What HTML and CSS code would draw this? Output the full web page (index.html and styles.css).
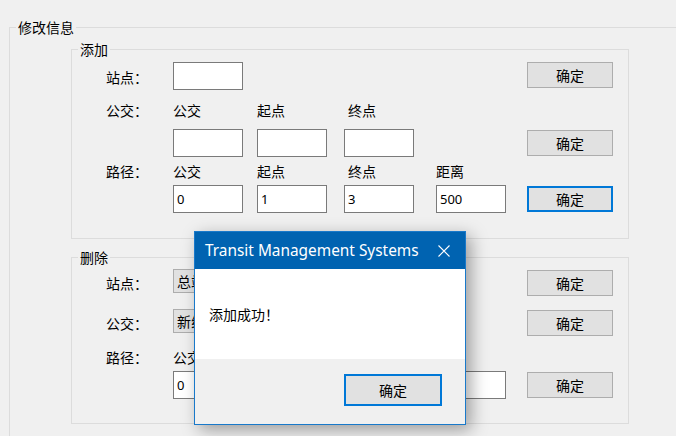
FILE: index.html
```html
<!DOCTYPE html>
<html lang="zh-CN">
<head>
    <meta charset="UTF-8">
    <title>修改信息</title>
    <link rel="stylesheet" href="styles.css">
</head>
<body>
    <fieldset class="group outer">
        <legend>修改信息</legend>

        <fieldset class="group add">
            <legend>添加</legend>
            <div class="rows">
                <div class="row h29">
                    <span class="lbl">站点：</span>
                    <input type="text" class="box mt1">
                    <button class="btn c6">确定</button>
                </div>
                <div class="row h38">
                    <span class="lbl">公交：</span>
                    <span class="lbl">公交</span>
                    <span class="lbl">起点</span>
                    <span class="lbl pl4">终点</span>
                </div>
                <div class="row h28">
                    <input type="text" class="box c2">
                    <input type="text" class="box">
                    <input type="text" class="box">
                    <button class="btn c6 mt1">确定</button>
                </div>
                <div class="row h28">
                    <span class="lbl">路径：</span>
                    <span class="lbl">公交</span>
                    <span class="lbl">起点</span>
                    <span class="lbl pl4">终点</span>
                    <span class="lbl">距离</span>
                </div>
                <div class="row h28">
                    <input type="text" class="box c2" value="0">
                    <input type="text" class="box" value="1">
                    <input type="text" class="box" value="3">
                    <input type="text" class="box" value="500">
                    <button class="btn focus c6 mt1">确定</button>
                </div>
            </div>
        </fieldset>

        <fieldset class="group del">
            <legend>删除</legend>
            <div class="rows">
                <div class="row h40">
                    <span class="lbl off6">站点：</span>
                    <div class="combo">总站</div>
                    <button class="btn c6 mt1">确定</button>
                </div>
                <div class="row h40">
                    <span class="lbl off6">公交：</span>
                    <div class="combo">新线</div>
                    <button class="btn c6 mt1">确定</button>
                </div>
                <div class="row h22">
                    <span class="lbl off0">路径：</span>
                    <span class="lbl off0">公交</span>
                    <span class="lbl off0">起点</span>
                    <span class="lbl off0 pl4">终点</span>
                    <span class="lbl off0">距离</span>
                </div>
                <div class="row h28">
                    <input type="text" class="box c2" value="0">
                    <input type="text" class="box">
                    <input type="text" class="box">
                    <input type="text" class="box">
                    <button class="btn c6 mt1">确定</button>
                </div>
            </div>
        </fieldset>
    </fieldset>

    <div class="msgbox">
        <div class="msg-title">
            <span>Transit Management Systems</span>
            <svg class="msg-close" width="12" height="12" viewBox="0 0 12 12">
                <path d="M0.5 0.5 L11.5 11.5 M11.5 0.5 L0.5 11.5" stroke="#fff" stroke-width="1.1" fill="none"/>
            </svg>
        </div>
        <div class="msg-body">添加成功！</div>
        <div class="msg-foot">
            <button class="btn focus msg-ok">确定</button>
        </div>
    </div>
</body>
</html>
```

FILE: styles.css
```css
body {
    margin: 0;
    width: 676px;
    height: 436px;
    overflow: hidden;
    position: relative;
    background: #f0f0f0;
    font-family: "Noto Sans CJK SC", sans-serif;
    font-size: 14px;
    color: #000;
}
.group {
    border: 1px solid #dcdcdc;
    margin: 0;
    padding: 0;
    min-width: 0;
    box-sizing: border-box;
}
.group > legend {
    margin-left: 6px;
    padding: 0 2px;
    line-height: 18px;
}
.outer {
    margin: 18px 0 0 9px;
    padding-top: 4px;
    height: 418px;
    border-right: none;
    border-bottom: none;
}
.add {
    margin-left: 61px;
    width: 558px;
    padding: 4px 0 25px 0;
}
.del {
    margin: 9px 0 0 61px;
    width: 558px;
    padding: 3px 0 24px 0;
}
.rows {
    padding-left: 34px;
}
.row {
    display: grid;
    grid-template-columns: 67px 84px 87px 92px 91px 86px;
    align-items: start;
}
.h22 { height: 22px; }
.h28 { height: 28px; }
.h29 { height: 29px; }
.h38 { height: 38px; }
.h40 { height: 40px; }
.c2 { grid-column: 2; }
.c6 { grid-column: 6; }
.mt1 { margin-top: 1px; }
.pl4 { padding-left: 4px; }
.lbl {
    line-height: 16px;
    align-self: center;
    white-space: nowrap;
}
.lbl.off6 {
    align-self: start;
    margin-top: 6px;
}
.lbl.off0 {
    align-self: start;
}
.box {
    width: 70px;
    height: 28px;
    margin: 0;
    padding: 0 3px;
    box-sizing: border-box;
    border: 1px solid #7a7a7a;
    border-radius: 0;
    background: #fff;
    font-family: "Noto Sans", sans-serif;
    font-size: 13px;
    color: #000;
    outline: none;
}
.btn {
    width: 86px;
    height: 26px;
    padding: 0;
    box-sizing: border-box;
    border: 1px solid #adadad;
    border-radius: 0;
    background: #e1e1e1;
    font-family: "Noto Sans CJK SC", sans-serif;
    font-size: 14px;
    color: #000;
}
.btn.focus {
    border: 2px solid #0078d7;
}
.combo {
    width: 121px;
    height: 24px;
    padding-left: 3px;
    box-sizing: border-box;
    border: 1px solid #adadad;
    background: #e1e1e1;
    line-height: 22px;
    white-space: nowrap;
}
.msgbox {
    position: absolute;
    left: 194px;
    top: 231px;
    width: 272px;
    height: 194px;
    box-sizing: border-box;
    border: 1px solid #1979ca;
    background: #f0f0f0;
    display: flex;
    flex-direction: column;
    box-shadow: 5px 5px 16px rgba(0, 0, 0, 0.35);
}
.msg-title {
    height: 37px;
    background: #0063b1;
    color: #fff;
    font-family: "Noto Sans", sans-serif;
    font-size: 15.4px;
    display: flex;
    align-items: center;
    justify-content: space-between;
    padding-left: 10px;
}
.msg-close {
    margin-right: 15px;
}
.msg-body {
    height: 90px;
    background: #fff;
    display: flex;
    align-items: center;
    padding-left: 14px;
}
.msg-foot {
    flex: 1;
    display: flex;
    justify-content: flex-end;
    align-items: flex-start;
    padding: 15px 23px 0 0;
}
.msg-ok {
    width: 98px;
    height: 32px;
}
```
